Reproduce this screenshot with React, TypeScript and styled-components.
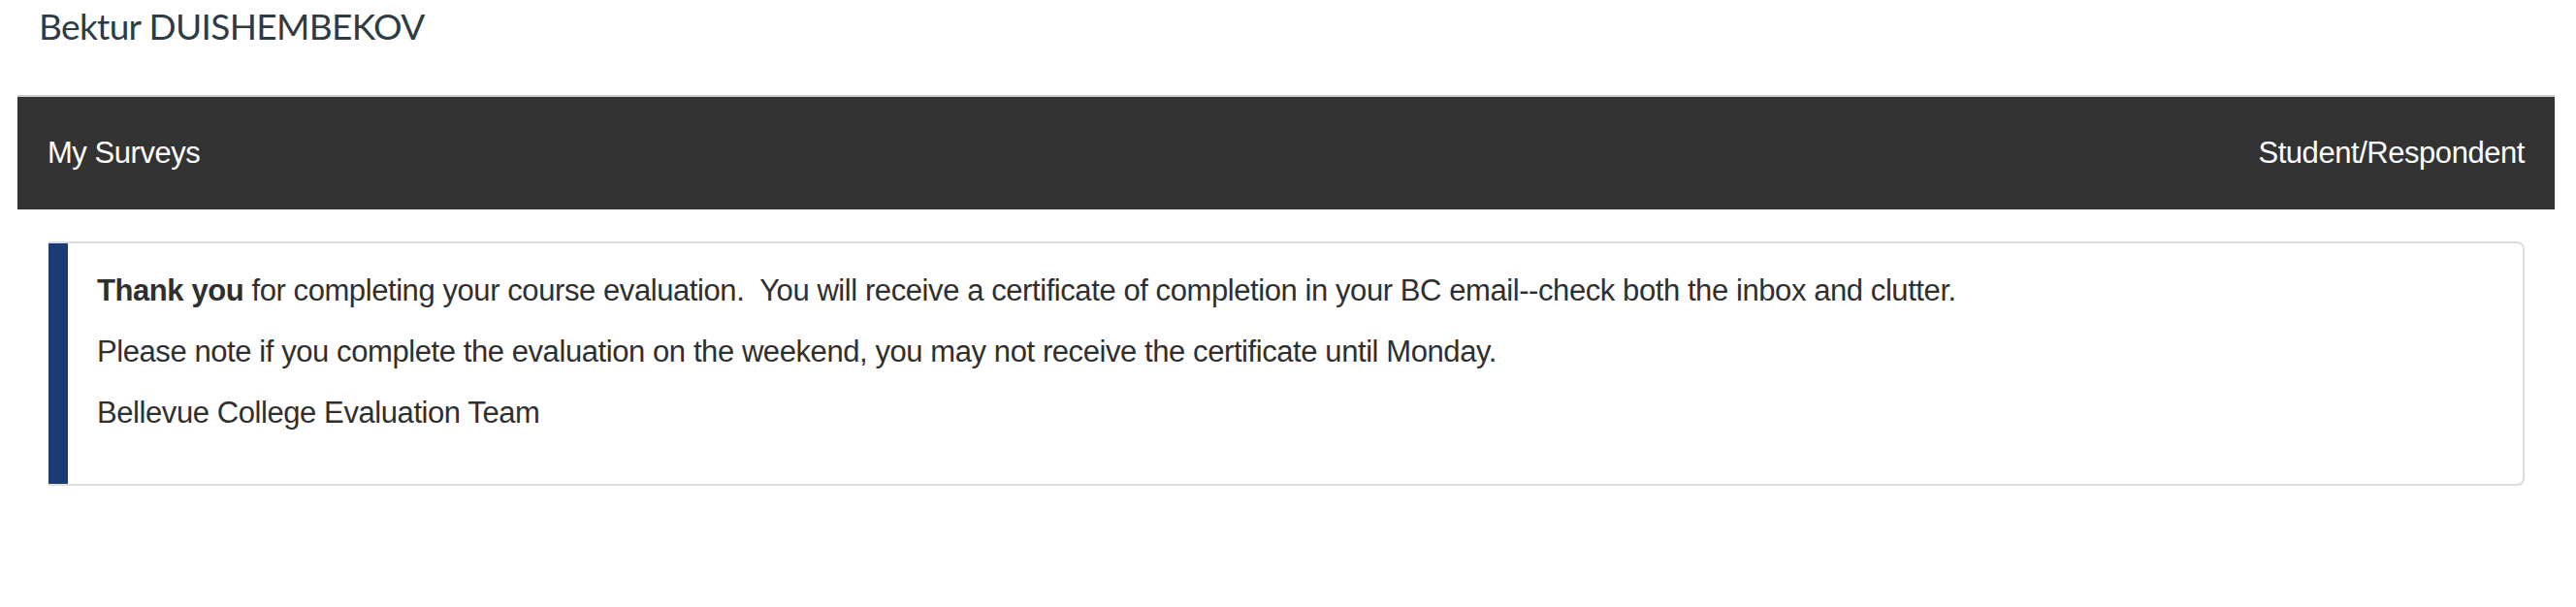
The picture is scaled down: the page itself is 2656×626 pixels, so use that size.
import React from "react";
import styled, { createGlobalStyle } from "styled-components";

const GlobalStyle = createGlobalStyle`
  html, body {
    margin: 0;
    padding: 0;
    background: #ffffff;
  }
  body {
    font-family: "Liberation Sans", Arial, Helvetica, sans-serif;
  }
`;

const Page = styled.div`
  display: flex;
  flex-direction: column;
  padding: 0 22px 0 18px;
`;

const UserName = styled.h1`
  margin: 0;
  padding: 5px 0 0 22px;
  height: 98px;
  box-sizing: border-box;
  font-family: Lato, "Open Sans", sans-serif;
  font-weight: 400;
  font-size: 37px;
  letter-spacing: -0.65px;
  line-height: 1.2;
  color: #2d3b45;
`;

const NavBar = styled.nav`
  display: flex;
  align-items: center;
  justify-content: space-between;
  height: 118px;
  box-sizing: border-box;
  padding: 0 31px;
  background: #333333;
  border-top: 2px solid #c7cdd1;
`;

const NavItem = styled.span`
  font-family: "Liberation Sans", Arial, Helvetica, sans-serif;
  font-size: 31px;
  letter-spacing: -0.45px;
  color: #ffffff;
`;

const Content = styled.main`
  display: flex;
  flex-direction: column;
  padding: 33px 53px 0 50px;
`;

const Notice = styled.section`
  display: flex;
  background: #ffffff;
  border: 2px solid #dddddd;
  border-left: none;
  border-radius: 0 8px 8px 0;
  box-shadow: 0 1px 2px rgba(0, 0, 0, 0.06);
  overflow: hidden;
`;

const Accent = styled.div`
  flex: 0 0 20px;
  background: #183c73;
`;

const NoticeBody = styled.div`
  flex: 1;
  padding: 26px 30px 33px 30px;
  color: #2f2f2f;
  font-family: "Liberation Sans", Arial, Helvetica, sans-serif;
  font-size: 31px;
  letter-spacing: -0.42px;
`;

const Para = styled.p`
  margin: 0 0 18px;
  line-height: 45px;
`;

export default function App() {
  return (
    <>
      <GlobalStyle />
      <Page>
        <UserName>Bektur DUISHEMBEKOV</UserName>
        <NavBar>
          <NavItem>My Surveys</NavItem>
          <NavItem>Student/Respondent</NavItem>
        </NavBar>
      </Page>
      <Content>
        <Notice>
          <Accent />
          <NoticeBody>
            <Para>
              <strong>Thank you</strong> for completing your course evaluation.{"\u00a0 "}You will
              receive a certificate of completion in your BC email--check both the inbox and
              clutter.
            </Para>
            <Para>
              Please note if you complete the evaluation on the weekend, you may not receive the
              certificate until Monday.
            </Para>
            <Para>Bellevue College Evaluation Team</Para>
          </NoticeBody>
        </Notice>
      </Content>
    </>
  );
}
